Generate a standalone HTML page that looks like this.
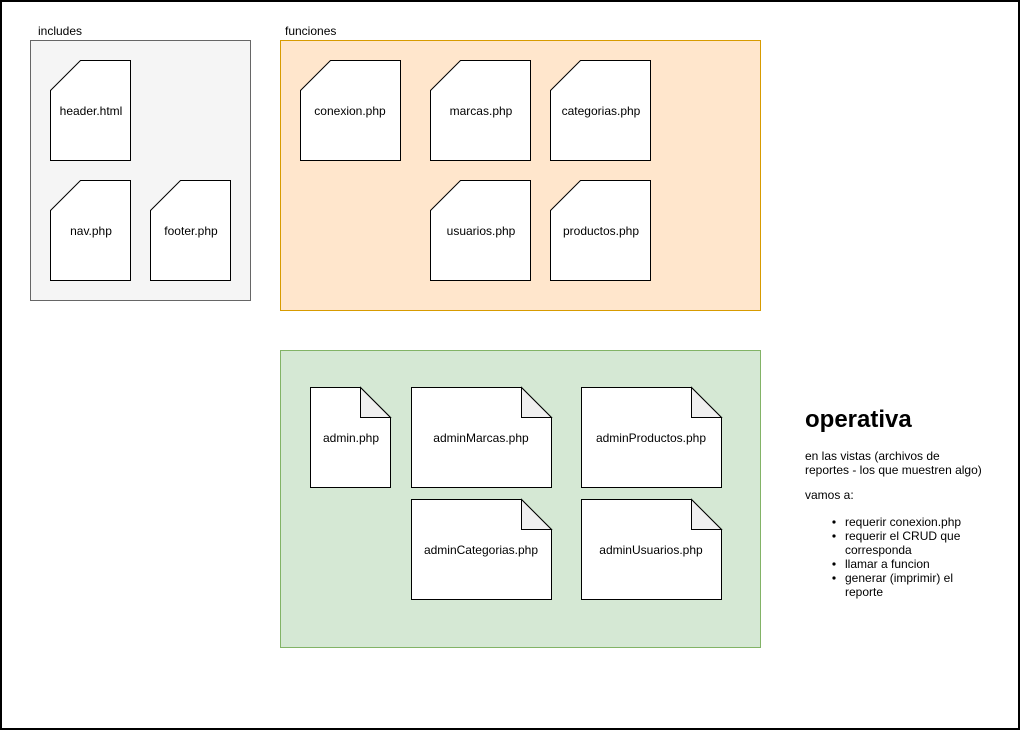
<!DOCTYPE html>
<html><head><meta charset="utf-8"><style>
html,body{margin:0;padding:0;background:#fff;}
svg{display:block;font-family:"Liberation Sans",Arial,sans-serif;}
</style></head><body>
<svg width="1021" height="731" viewBox="0 0 1021 731" xmlns="http://www.w3.org/2000/svg">
<rect x="1" y="1" width="1018" height="728" fill="#fff" stroke="#000" stroke-width="2"/>
<text x="38" y="35" font-size="12" fill="#000">includes</text>
<text x="285" y="35" font-size="12" fill="#000">funciones</text>
<rect x="30.5" y="40.5" width="220" height="260" fill="#f5f5f5" stroke="#666"/>
<rect x="280.5" y="40.5" width="480" height="270" fill="#ffe6cc" stroke="#d79b00"/>
<rect x="280.5" y="350.5" width="480" height="297" fill="#d5e8d4" stroke="#82b366"/>
<g fill="#fff" stroke="#000" stroke-width="1">
<path d="M80.5 60.5H130.5V160.5H50.5V90.5Z"/>
<path d="M80.5 180.5H130.5V280.5H50.5V210.5Z"/>
<path d="M180.5 180.5H230.5V280.5H150.5V210.5Z"/>
<path d="M330.5 60.5H400.5V160.5H300.5V90.5Z"/>
<path d="M460.5 60.5H530.5V160.5H430.5V90.5Z"/>
<path d="M580.5 60.5H650.5V160.5H550.5V90.5Z"/>
<path d="M460.5 180.5H530.5V280.5H430.5V210.5Z"/>
<path d="M580.5 180.5H650.5V280.5H550.5V210.5Z"/>
<path d="M310.5 387.5H360.5L390.5 417.5V487.5H310.5Z"/>
<path d="M411.5 387.5H521.5L551.5 417.5V487.5H411.5Z"/>
<path d="M581.5 387.5H691.5L721.5 417.5V487.5H581.5Z"/>
<path d="M411.5 499.5H521.5L551.5 529.5V599.5H411.5Z"/>
<path d="M581.5 499.5H691.5L721.5 529.5V599.5H581.5Z"/>
</g>
<g fill="#f0f0f0" stroke="#000" stroke-width="1">
<path d="M360.5 387.5V417.5H390.5Z"/>
<path d="M521.5 387.5V417.5H551.5Z"/>
<path d="M691.5 387.5V417.5H721.5Z"/>
<path d="M521.5 499.5V529.5H551.5Z"/>
<path d="M691.5 499.5V529.5H721.5Z"/>
</g>
<g font-size="12" fill="#000" text-anchor="middle">
<text x="91" y="115">header.html</text>
<text x="91" y="235">nav.php</text>
<text x="191" y="235">footer.php</text>
<text x="350" y="115">conexion.php</text>
<text x="481" y="115">marcas.php</text>
<text x="601" y="115">categorias.php</text>
<text x="481" y="235">usuarios.php</text>
<text x="601" y="235">productos.php</text>
<text x="351" y="442">admin.php</text>
<text x="481" y="442">adminMarcas.php</text>
<text x="651" y="442">adminProductos.php</text>
<text x="481" y="554">adminCategorias.php</text>
<text x="651" y="554">adminUsuarios.php</text>
</g>
<text x="805" y="427" font-size="24" font-weight="bold" fill="#000">operativa</text>
<g font-size="12" fill="#000">
<text x="805" y="460">en las vistas (archivos de</text>
<text x="805" y="474">reportes - los que muestren algo)</text>
<text x="805" y="499">vamos a:</text>
<text x="845" y="526">requerir conexion.php</text>
<text x="845" y="540">requerir el CRUD que</text>
<text x="845" y="554">corresponda</text>
<text x="845" y="568">llamar a funcion</text>
<text x="845" y="582">generar (imprimir) el</text>
<text x="845" y="596">reporte</text>
<circle cx="834" cy="522" r="1.6"/>
<circle cx="834" cy="536" r="1.6"/>
<circle cx="834" cy="564" r="1.6"/>
<circle cx="834" cy="578" r="1.6"/>
</g>
</svg>
</body></html>
